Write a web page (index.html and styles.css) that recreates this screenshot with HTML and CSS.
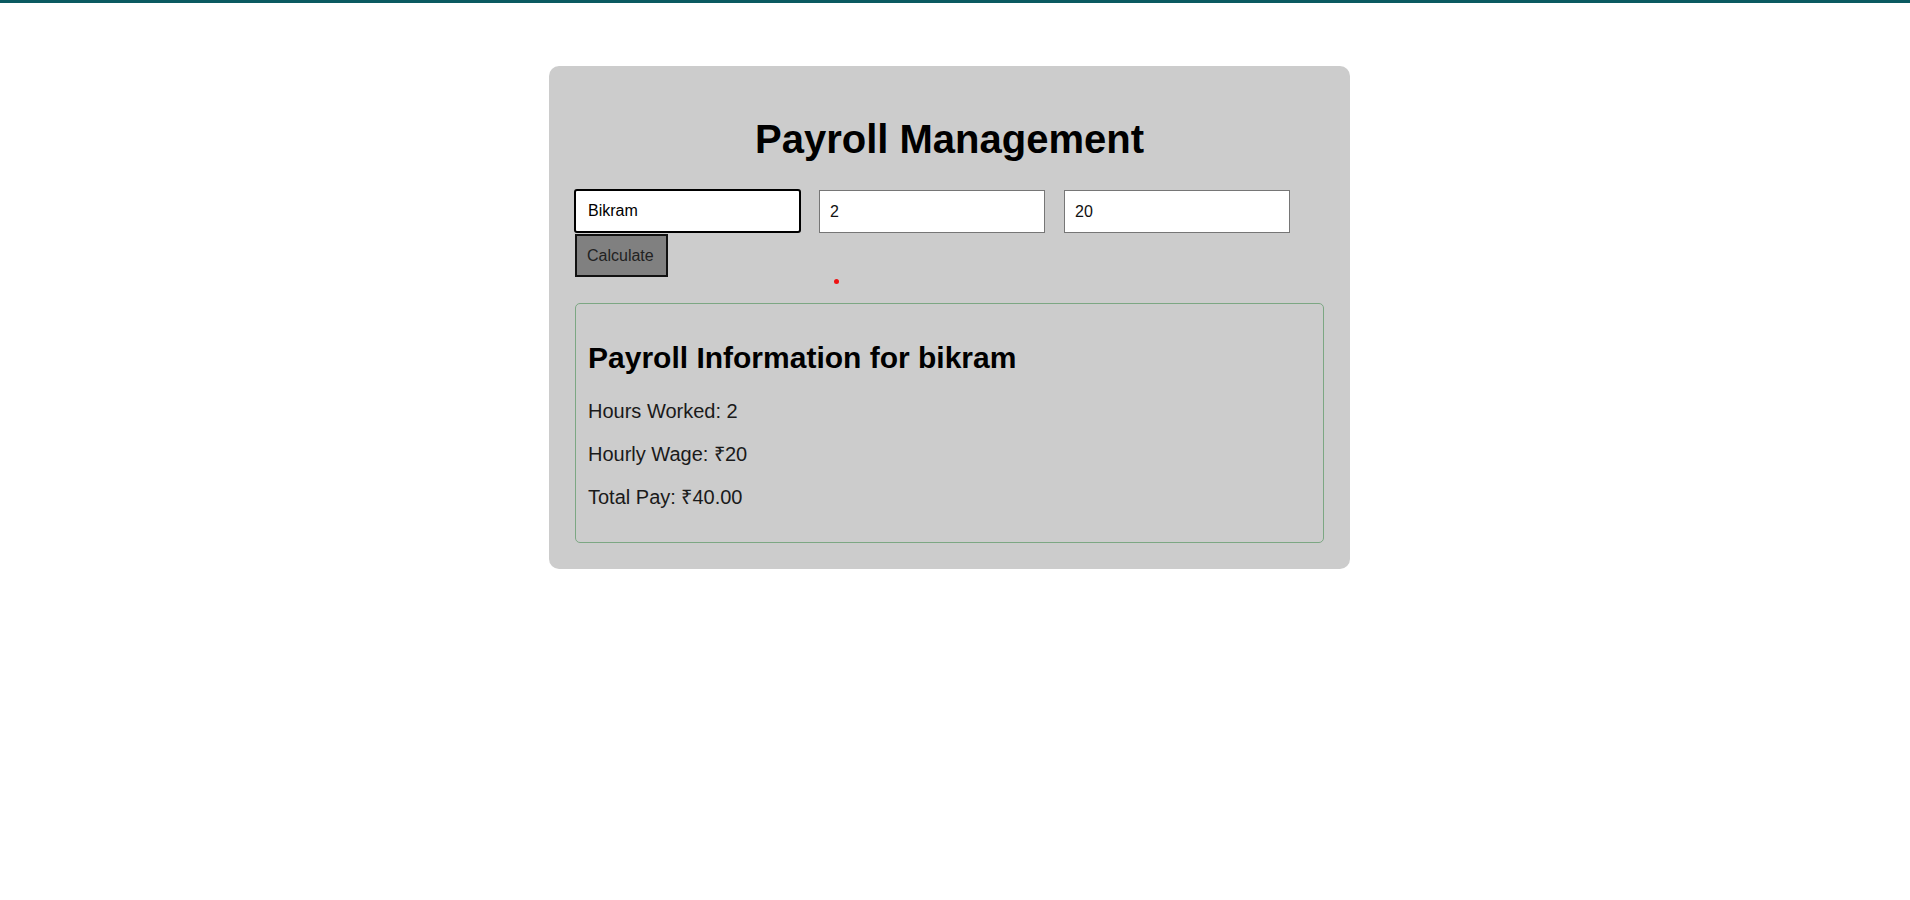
FILE: index.html
```html
<!DOCTYPE html>
<html lang="en">
<head>
<meta charset="utf-8">
<title>Payroll Management</title>
<link rel="stylesheet" href="styles.css">
</head>
<body>
<div class="topbar"></div>
<div class="page">
  <div class="card">
    <h1 class="title">Payroll Management</h1>
    <div class="form">
      <input class="field focused" type="text" value="Bikram">
      <input class="field" type="text" value="2">
      <input class="field" type="text" value="20">
      <button class="btn">Calculate</button>
    </div>
    <div class="error-row"><span class="dot"></span></div>
    <div class="result">
      <h2 class="result-title">Payroll Information for bikram</h2>
      <p class="line">Hours Worked: 2</p>
      <p class="line">Hourly Wage: ₹20</p>
      <p class="line">Total Pay: ₹40.00</p>
    </div>
  </div>
</div>
</body>
</html>
```

FILE: styles.css
```css
html, body {
  margin: 0;
  padding: 0;
  background: #ffffff;
  font-family: "Liberation Sans", Arial, sans-serif;
  font-size: 20px;
}

.topbar {
  height: 3px;
  background: #0b5a61;
}

.page {
  width: 1899px;
  padding-top: 63px;
}

.card {
  box-sizing: border-box;
  width: 801px;
  margin: 0 auto;
  background: #cccccc;
  border-radius: 10px;
  padding: 23px 26px 26px;
}

.title {
  font-size: 40px;
  line-height: 46px;
  font-weight: bold;
  text-align: center;
  margin: 26.8px 0 28.5px;
  color: #000;
}

.form {
  display: flex;
  flex-wrap: wrap;
  column-gap: 19px;
  row-gap: 1px;
  align-items: flex-start;
}

.field {
  box-sizing: border-box;
  width: 226px;
  height: 43px;
  margin: 0;
  padding: 0 10px;
  border: 1px solid #767676;
  background: #fff;
  font-family: "Liberation Sans", Arial, sans-serif;
  font-size: 16px;
  color: #111;
}

.field.focused {
  border: 2px solid #000;
  border-radius: 3px;
  padding: 0 11px 0 12px;
  width: 227px;
  height: 44px;
  margin-top: -1px;
  margin-left: -1px;
  margin-right: -1px;
  color: #000;
  outline: none;
}

.btn {
  box-sizing: border-box;
  width: 93px;
  height: 43px;
  margin: 0;
  padding: 0 10px;
  border: 2px solid #111;
  background: #808080;
  color: #222;
  font-family: "Liberation Sans", Arial, sans-serif;
  font-size: 16px;
  text-align: left;
}

.error-row {
  height: 24px;
}

.dot {
  display: block;
  width: 5px;
  height: 5px;
  border-radius: 50%;
  background: #ee1111;
  margin-left: 259px;
  margin-top: 2px;
}

.result {
  border: 1px solid #7ca783;
  border-radius: 5px;
  padding: 0 12px;
  overflow: hidden;
}

.result-title {
  font-size: 30px;
  line-height: 34px;
  font-weight: bold;
  margin: 24.9px 0;
  padding-top: 12px;
  color: #000;
}

.line {
  font-size: 20px;
  line-height: 23px;
  margin: 20px 0;
  color: #1a1a1a;
}

.line:last-child {
  margin-bottom: 20px;
  padding-bottom: 13px;
}
```
